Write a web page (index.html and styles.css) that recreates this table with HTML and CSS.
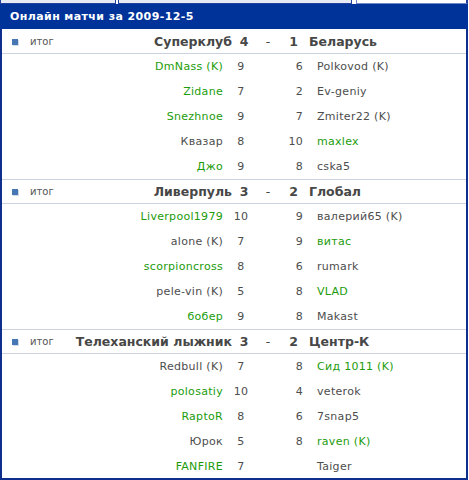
FILE: index.html
```html
<!DOCTYPE html>
<html>
<head>
<meta charset="utf-8">
<link rel="stylesheet" href="styles.css">
</head>
<body>
<div class="tabs">
  <div class="tab t1"></div>
  <div class="tab t2"></div>
  <div class="tab t3"></div>
</div>
<div class="box">
  <div class="title">Онлайн матчи за 2009-12-5</div>

  <div class="match">
    <div class="mhead first">
      <div class="mleft"><span class="bullet"></span><span class="itog">итог</span><span class="team1">Суперклуб</span></div>
      <span class="ms1">4</span><span class="dash">-</span><span class="ms2">1</span><span class="team2">Беларусь</span>
    </div>
    <div class="prow"><span class="n1 g">DmNass (K)</span><span class="s1">9</span><span class="s2">6</span><span class="n2">Polkovod (K)</span></div>
    <div class="prow"><span class="n1 g">Zidane</span><span class="s1">7</span><span class="s2">2</span><span class="n2">Ev-geniy</span></div>
    <div class="prow"><span class="n1 g">Snezhnoe</span><span class="s1">9</span><span class="s2">7</span><span class="n2">Zmiter22 (K)</span></div>
    <div class="prow"><span class="n1">Квазар</span><span class="s1">8</span><span class="s2">10</span><span class="n2 g">maxlex</span></div>
    <div class="prow"><span class="n1 g">Джо</span><span class="s1">9</span><span class="s2">8</span><span class="n2">cska5</span></div>
  </div>

  <div class="match">
    <div class="mhead">
      <div class="mleft"><span class="bullet"></span><span class="itog">итог</span><span class="team1">Ливерпуль</span></div>
      <span class="ms1">3</span><span class="dash">-</span><span class="ms2">2</span><span class="team2">Глобал</span>
    </div>
    <div class="prow"><span class="n1 g">Liverpool1979</span><span class="s1">10</span><span class="s2">9</span><span class="n2">валерий65 (K)</span></div>
    <div class="prow"><span class="n1">alone (K)</span><span class="s1">7</span><span class="s2">9</span><span class="n2 g">витас</span></div>
    <div class="prow"><span class="n1 g">scorpioncross</span><span class="s1">8</span><span class="s2">6</span><span class="n2">rumark</span></div>
    <div class="prow"><span class="n1">pele-vin (K)</span><span class="s1">5</span><span class="s2">8</span><span class="n2 g">VLAD</span></div>
    <div class="prow"><span class="n1 g">бобер</span><span class="s1">9</span><span class="s2">8</span><span class="n2">Makast</span></div>
  </div>

  <div class="match">
    <div class="mhead">
      <div class="mleft"><span class="bullet"></span><span class="itog">итог</span><span class="team1">Телеханский лыжник</span></div>
      <span class="ms1">3</span><span class="dash">-</span><span class="ms2">2</span><span class="team2">Центр-К</span>
    </div>
    <div class="prow"><span class="n1">Redbull (K)</span><span class="s1">7</span><span class="s2">8</span><span class="n2 g">Сид 1011 (K)</span></div>
    <div class="prow"><span class="n1 g">polosatiy</span><span class="s1">10</span><span class="s2">4</span><span class="n2">veterok</span></div>
    <div class="prow"><span class="n1 g">RaptoR</span><span class="s1">8</span><span class="s2">6</span><span class="n2">7snap5</span></div>
    <div class="prow"><span class="n1">Юрок</span><span class="s1">5</span><span class="s2">8</span><span class="n2 g">raven (K)</span></div>
    <div class="prow"><span class="n1 g">FANFIRE</span><span class="s1">7</span><span class="s2"></span><span class="n2">Taiger</span></div>
  </div>
</div>
</body>
</html>
```

FILE: styles.css
```css
* { box-sizing: border-box; }
html, body { margin: 0; padding: 0; background: #fff; }
body { font-family: "DejaVu Sans", Verdana, sans-serif; width: 469px; height: 480px; overflow: hidden; }

.tabs { display: flex; height: 4px; width: 468px; overflow: hidden; }
.tab { height: 4px; border: 1px solid #22409c; border-top: none; background: #e6eaf2; }
.t1 { width: 116px; }
.t2 { width: 234px; margin-left: 2px; }
.t3 { flex: 1; margin-left: 4px; border-color: #6d87c8; border-right: 2px solid #22409c; background: #fff; }

.box { width: 468px; height: 476px; border: 2px solid #0e2f8c; border-top: none; }

.title { height: 25px; background: #003399; color: #fff; font-weight: bold; font-size: 11px; letter-spacing: 0.4px; line-height: 26px; margin: 0 -2px; padding-left: 10px; }

.mhead { height: 25px; border-top: 1px solid #cbd3e2; border-bottom: 1px solid #cbd3e2; display: grid; grid-template-columns: 230px 24px 24px 18px 1fr; align-items: center; color: #474747; font-weight: bold; font-size: 12.5px; }
.mhead.first { border-top-color: #fff; }
.mleft { display: flex; align-items: center; padding-left: 10px; }
.bullet { width: 6px; height: 6px; background: #4776b4; box-shadow: 1px 1px 0 #d4dbe8; margin-right: 12px; }
.itog { font-weight: normal; font-size: 10px; color: #555; }
.team1 { flex: 1; text-align: right; white-space: nowrap; }
.ms1 { text-align: center; }
.dash { text-align: center; font-weight: normal; }
.ms2 { text-align: right; }
.team2 { padding-left: 11px; white-space: nowrap; }

.prow { height: 25px; display: grid; grid-template-columns: 229px 20px 52px 1fr; align-items: center; font-size: 11px; letter-spacing: 0.3px; color: #4d4d4d; }
.n1 { text-align: right; padding-right: 8px; white-space: nowrap; }
.s1 { text-align: center; }
.s2 { text-align: right; }
.n2 { padding-left: 14px; white-space: nowrap; }
.g { color: #1c9c0c; }
```
